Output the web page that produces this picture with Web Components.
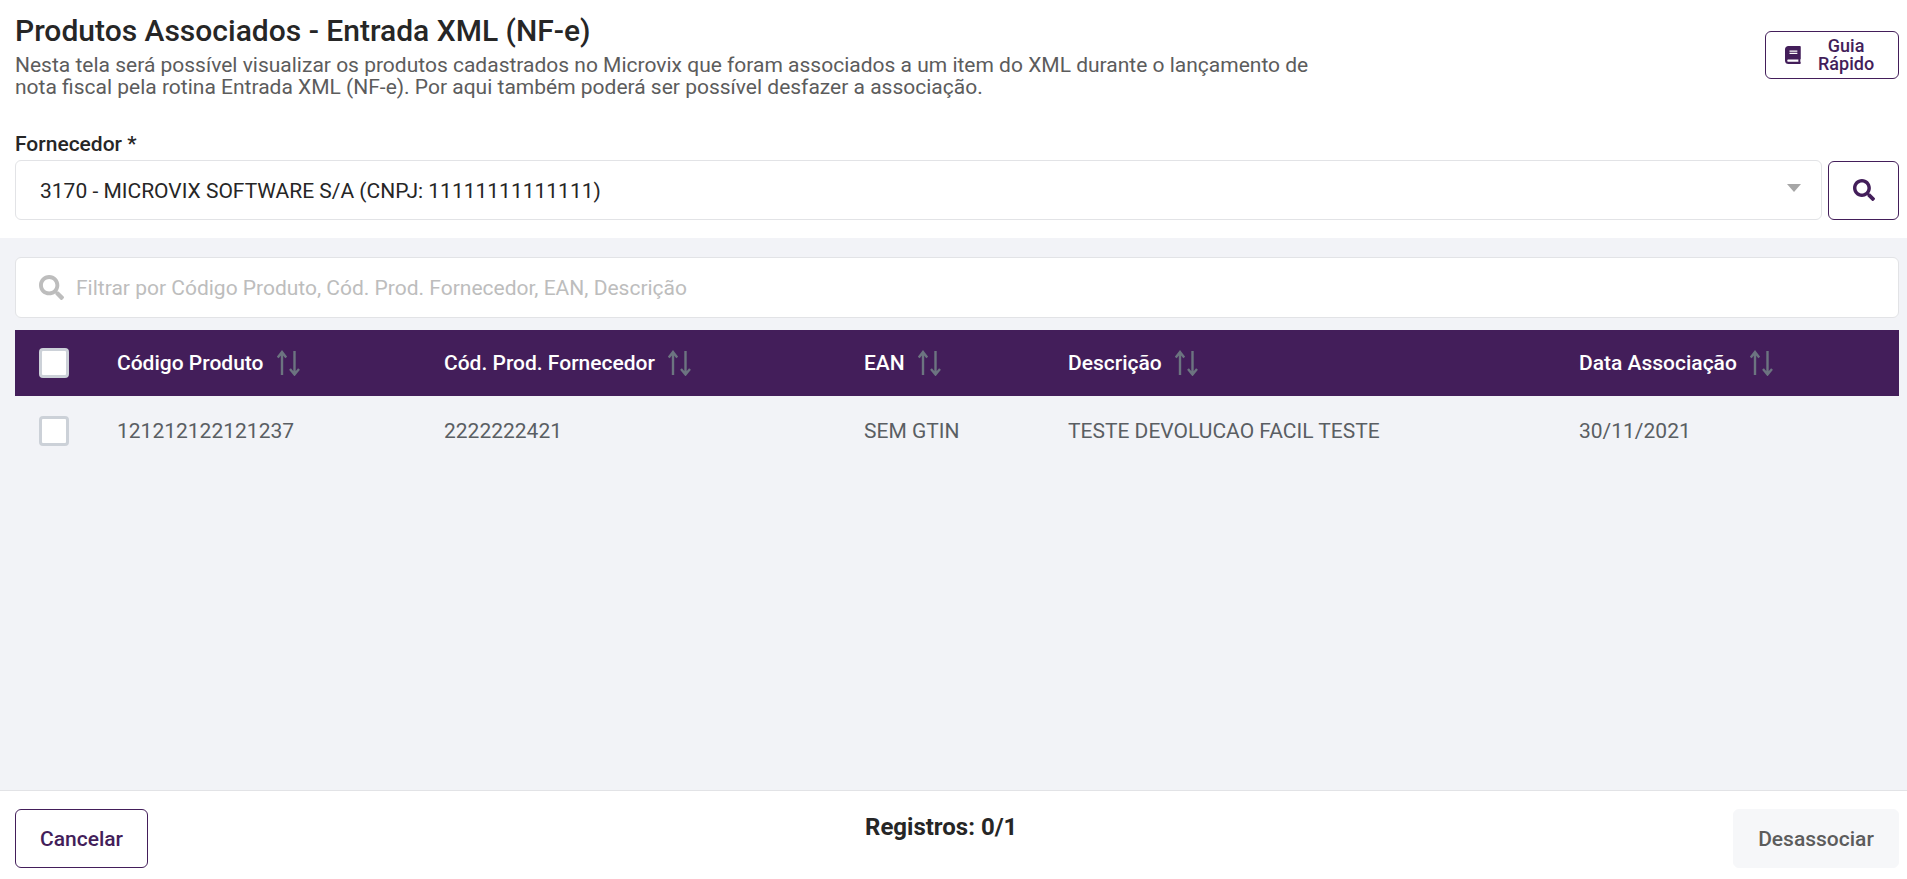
<!DOCTYPE html>
<html lang="pt-BR">
<head>
<meta charset="utf-8">
<title>Produtos Associados</title>
<style>
  html, body { margin: 0; height: 100%; }
  body { font-family: Roboto, "Liberation Sans", sans-serif; background: #f2f3f7; overflow: hidden; }
</style>
</head>
<body>
<associados-page></associados-page>

<script>
var PURPLE = '#431e5a';

var ICONS = {
  search: '<path d="M505 442.700L405.300 343c-4.500-4.500-10.600-7-17-7H372c27.600-35.300 44-79.700 44-128C416 93.100 322.900 0 208 0S0 93.100 0 208s93.100 208 208 208c48.300 0 92.700-16.400 128-44v16.300c0 6.400 2.500 12.500 7 17l99.700 99.700c9.400 9.400 24.600 9.400 33.900 0l28.300-28.300c9.400-9.400 9.400-24.600.1-34zM208 336c-70.700 0-128-57.200-128-128 0-70.700 57.200-128 128-128 70.700 0 128 57.200 128 128 0 70.700-57.200 128-128 128z"/>',
  book: '<path d="M448 360V24c0-13.300-10.700-24-24-24H96C43 0 0 43 0 96v320c0 53 43 96 96 96h328c13.300 0 24-10.700 24-24v-16c0-7.500-3.500-14.300-8.900-18.700-4.200-15.400-4.200-59.300 0-74.700 5.400-4.300 8.900-11.100 8.900-18.600zM128 134c0-3.300 2.700-6 6-6h212c3.300 0 6 2.700 6 6v20c0 3.300-2.700 6-6 6H134c-3.300 0-6-2.700-6-6v-20zm0 64c0-3.300 2.700-6 6-6h212c3.300 0 6 2.700 6 6v20c0 3.300-2.700 6-6 6H134c-3.300 0-6-2.700-6-6v-20zm253.400 250H96c-17.700 0-32-14.300-32-32 0-17.600 14.400-32 32-32h285.400c-1.900 17.100-1.900 46.900 0 64z"/>'
};

class AppIcon extends HTMLElement {
  connectedCallback() {
    var shadow = this.attachShadow({mode: 'open'});
    var name = this.getAttribute('name');
    var box = name == 'book' ? '0 0 448 512' : '0 0 512 512';
    shadow.innerHTML = '<style>' +
    ':host {display: inline-flex; width: 1em; height: 1em; align-items: center; justify-content: center;}' +
    'svg {height: 100%; fill: currentColor; display: block;}' +
    '</style><svg viewBox="' + box + '">' + ICONS[name] + '</svg>';
  }
}
customElements.define('app-icon', AppIcon);

class AppButton extends HTMLElement {
  constructor() {
    super();
    var shadow = this.attachShadow({mode: 'open'});
    shadow.innerHTML = '<style>' +
    ':host {display: inline-flex; align-items: center; justify-content: center; box-sizing: border-box;' +
    ' height: 59px; border: 1px solid ' + PURPLE + '; border-radius: 6px; background: #fff; color: ' + PURPLE + ';' +
    ' font-size: 21px; font-weight: 500;}' +
    ':host([disabled]) {background: #f6f7f9; border-color: #f6f7f9; color: #5c5c5c;}' +
    '</style><slot></slot>';
  }
}
customElements.define('app-button', AppButton);

class AppCheckbox extends HTMLElement {
  constructor() {
    super();
    var shadow = this.attachShadow({mode: 'open'});
    shadow.innerHTML = '<style>' +
    ':host {display: block; box-sizing: border-box; width: 30px; height: 30px; background: #fff;' +
    ' border: 3px solid #ccd1d8; border-radius: 4px;}' +
    '</style>';
  }
}
customElements.define('app-checkbox', AppCheckbox);

class PageHeader extends HTMLElement {
  constructor() {
    super();
    var shadow = this.attachShadow({mode: 'open'});
    shadow.innerHTML = '<style>' +
    ':host {display: block; background: #fff; height: 238px; box-sizing: border-box; padding: 13px 8px 0 15px;}' +
    '.top {display: flex; justify-content: space-between; align-items: flex-start; height: 119px;}' +
    'h1 {margin: 0 0 5px; font-size: 30px; line-height: 36px; font-weight: 500; color: #262626;}' +
    'p {margin: 0; width: 1320px; font-size: 21px; line-height: 22px; color: #5c5c5c;}' +
    '.guide {width: 134px; height: 48px; margin-top: 18px; gap: 16px; padding-left: 18px; justify-content: flex-start;' +
    ' font-size: 18px; line-height: 18px; text-align: center;}' +
    '.guide app-icon {font-size: 18px;}' +
    'label {display: block; font-size: 21px; font-weight: 500; line-height: 24px; color: #262626; margin-bottom: 4px; margin-top: 0;}' +
    '.row {display: flex; gap: 6px; align-items: center;}' +
    '.select {flex: 1; height: 60px; box-sizing: border-box; border: 1px solid #e2e3e6; border-radius: 6px; display: flex;' +
    ' align-items: center; justify-content: space-between; padding: 2px 20px 0 24px; font-size: 21px; color: #262626;}' +
    '.caret {width: 0; height: 0; border-left: 7px solid transparent; border-right: 7px solid transparent; border-top: 8px solid #a6a6a6; margin-top: -6px;}' +
    '.go {width: 71px; font-size: 22px;}' +
    '</style>' +
    '<div class="top"><div><h1><slot name="title"></slot></h1><p><slot name="text"></slot></p></div>' +
    '<app-button class="guide"><app-icon name="book"></app-icon><span>Guia<br>Rápido</span></app-button></div>' +
    '<label><slot name="label"></slot></label>' +
    '<div class="row"><div class="select"><span><slot name="value"></slot></span><span class="caret"></span></div>' +
    '<app-button class="go"><app-icon name="search"></app-icon></app-button></div>';
  }
}
customElements.define('page-header', PageHeader);

class FilterBox extends HTMLElement {
  constructor() {
    super();
    var shadow = this.attachShadow({mode: 'open'});
    shadow.innerHTML = '<style>' +
    ':host {display: flex; align-items: center; gap: 12px; box-sizing: border-box; height: 61px; background: #fff;' +
    ' border: 1px solid #e2e3e6; border-radius: 6px; padding-left: 23px; font-size: 21px; color: #bdbdbd;}' +
    'app-icon {font-size: 25px;}' +
    '</style><app-icon name="search"></app-icon><span><slot></slot></span>';
  }
}
customElements.define('filter-box', FilterBox);

class SortHead extends HTMLElement {
  constructor() {
    super();
    var shadow = this.attachShadow({mode: 'open'});
    shadow.innerHTML = '<style>' +
    ':host {display: flex; align-items: center; gap: 13px;}' +
    'svg {width: 23px; height: 26px; stroke: #6c7480; stroke-width: 2.400; fill: none; display: block;}' +
    '</style><span><slot></slot></span>' +
    '<svg viewBox="0 0 23 26"><path d="M5 25V2M.8 7.500L5 2l4.200 5.500M17.500 1v23.500M13 19l4.500 5.500L22 19"/></svg>';
  }
}
customElements.define('sort-head', SortHead);

class DataTable extends HTMLElement {
  constructor() {
    super();
    var shadow = this.attachShadow({mode: 'open'});
    shadow.innerHTML = '<style>' +
    ':host {display: block; margin-top: 12px;}' +
    '.row {display: grid; grid-template-columns: 102px 327px 420px 204px 511px 1fr; align-items: center; }' +
    '.head {height: 66px; background: ' + PURPLE + '; color: #fff; font-size: 21px; font-weight: 500;}' +
    '.body {height: 70px; color: #5a5e63; font-size: 21px;}' +
    'app-checkbox {margin-left: 24px;}' +
    '</style>' +
    '<div class="row head"><app-checkbox></app-checkbox>' +
    '<sort-head>Código Produto</sort-head><sort-head>Cód. Prod. Fornecedor</sort-head>' +
    '<sort-head>EAN</sort-head><sort-head>Descrição</sort-head><sort-head>Data Associação</sort-head></div>' +
    '<div class="row body"><app-checkbox></app-checkbox>' +
    '<span>121212122121237</span><span>2222222421</span><span>SEM GTIN</span>' +
    '<span>TESTE DEVOLUCAO FACIL TESTE</span><span>30/11/2021</span></div>';
  }
}
customElements.define('data-table', DataTable);

class PageFooter extends HTMLElement {
  constructor() {
    super();
    var shadow = this.attachShadow({mode: 'open'});
    shadow.innerHTML = '<style>' +
    ':host {display: grid; grid-template-columns: 850px auto 1fr; align-items: start; box-sizing: border-box; height: 89px;' +
    ' background: #fff; border-top: 1px solid #e2e3e6; padding: 18px 8px 0 15px;}' +
    '.count {font-size: 24px; font-weight: 700; color: #262626; line-height: 28px; margin-top: 4px;}' +
    '.cancel {width: 133px;}' +
    '.undo {width: 166px; justify-self: end;}' +
    '</style>' +
    '<div><app-button class="cancel">Cancelar</app-button></div>' +
    '<div class="count"><slot name="count"></slot></div>' +
    '<app-button class="undo" disabled>Desassociar</app-button>';
  }
}
customElements.define('page-footer', PageFooter);

class AssociadosPage extends HTMLElement {
  constructor() {
    super();
    var shadow = this.attachShadow({mode: 'open'});
    shadow.innerHTML = '<style>' +
    ':host {display: flex; flex-direction: column; height: 879px;}' +
    'main {flex: 1; padding: 19px 8px 0 15px;}' +
    '</style>' +
    '<page-header>' +
    '<span slot="title">Produtos Associados - Entrada XML (NF-e)</span>' +
    '<span slot="text">Nesta tela será possível visualizar os produtos cadastrados no Microvix que foram associados a um item do XML durante o lançamento de nota fiscal pela rotina Entrada XML (NF-e). Por aqui também poderá ser possível desfazer a associação.</span>' +
    '<span slot="label">Fornecedor *</span>' +
    '<span slot="value">3170 - MICROVIX SOFTWARE S/A (CNPJ: 11111111111111)</span>' +
    '</page-header>' +
    '<main><filter-box>Filtrar por Código Produto, Cód. Prod. Fornecedor, EAN, Descrição</filter-box>' +
    '<data-table></data-table></main>' +
    '<page-footer><span slot="count">Registros: 0/1</span></page-footer>';
  }
}
customElements.define('associados-page', AssociadosPage);
</script>
</body>
</html>
